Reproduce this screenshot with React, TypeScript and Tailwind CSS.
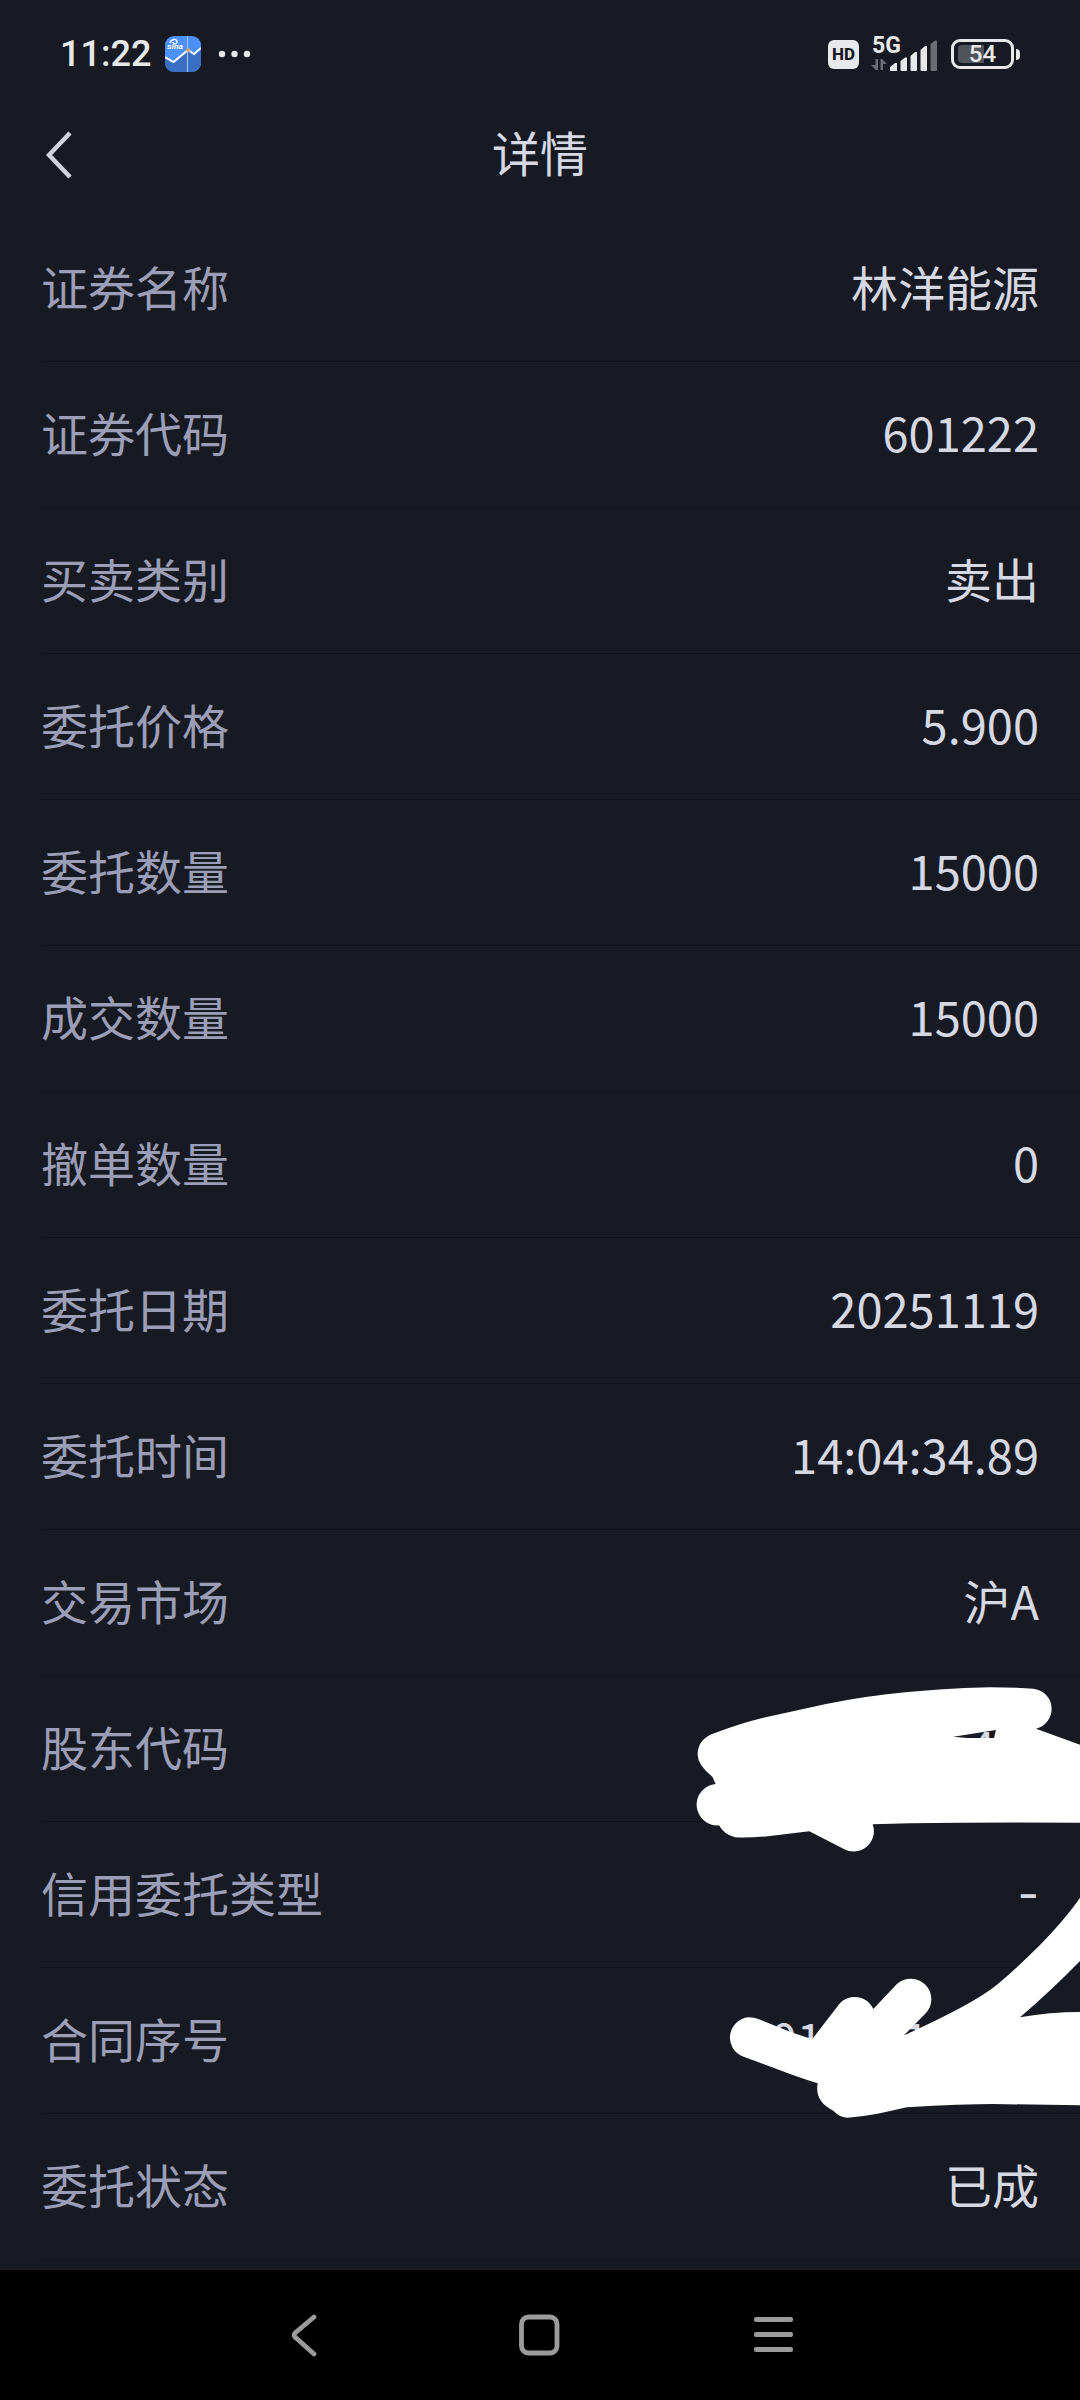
import type { ReactNode } from "react";

function StatusBar() {
  return (
    <div className="flex h-[108px] items-center justify-between pl-[60px] pr-[60px] text-[#e8e8ea]">
      <div className="flex items-center">
        <time className="font-['Roboto',sans-serif] text-[36px] font-medium leading-none">11:22</time>
        <svg className="ml-[14px]" width="36" height="36" viewBox="0 0 36 36" role="img" aria-label="sina">
          <defs>
            <clipPath id="appTile">
              <rect width="36" height="36" rx="9" />
            </clipPath>
          </defs>
          <g clipPath="url(#appTile)">
            <rect width="36" height="36" fill="#4b90fb" />
            <path d="M0 22 8 26 23 14 29 18 36 12V36H0Z" fill="#3a6fc4" />
            <path d="M22.500 0V36" stroke="#a9c3ee" strokeWidth="1" />
            <path d="M0 21 8.500 26 23 14 29 18 36 12" fill="none" stroke="#fff" strokeWidth="2" />
            <circle cx="23" cy="14" r="2" fill="#dba26a" />
            <path d="M5 7C6 3 12 2 12 6C12 9 8 8 8 6" fill="none" stroke="#fff" strokeWidth="1.300" />
            <text x="2" y="13" fill="#fff" fontSize="8" fontWeight="700" fontStyle="italic" fontFamily="Liberation Sans, sans-serif">
              sina
            </text>
          </g>
        </svg>
        <svg className="ml-[17px]" width="34" height="8" viewBox="0 0 34 8" fill="currentColor" aria-hidden="true">
          <circle cx="4" cy="4" r="3.200" />
          <circle cx="16.500" cy="4" r="3.200" />
          <circle cx="29" cy="4" r="3.200" />
        </svg>
      </div>
      <div className="flex items-center font-['Roboto',sans-serif]">
        <span className="flex h-[29px] w-[31px] items-center justify-center rounded-md bg-[#e8e8ea] text-[17px] font-extrabold leading-none text-[#171a22]">
          HD
        </span>
        <div className="relative ml-3 h-[34px] w-[67px]">
          <span className="absolute left-px top-0 text-[23px] font-bold leading-[17px]">5G</span>
          <svg width="67" height="34" viewBox="0 0 67 34" fill="currentColor" aria-hidden="true">
            <path d="M4.500 22H7V33H5L0 28H4.500ZM9.500 33V22H11L16 27H12V33Z" fill="#6b6d74" />
            <path d="M19 30 24 26H26V34H20Q19 34 19 33ZM29.500 24 34 20.500H36V33Q36 34 35 34H31Q29.500 34 29.500 33ZM39.500 19 44 15H46V33Q46 34 45 34H41Q39.500 34 39.500 33ZM49.500 13 54 9H56V33Q56 34 55 34H51Q49.500 34 49.500 33Z" />
            <path d="M59.500 7 64 3.500H66V33Q66 34 65 34H61Q59.500 34 59.500 33Z" fill="#6b6d74" />
          </svg>
        </div>
        <div className="ml-[13px] flex items-center gap-[2px]">
          <div className="relative flex h-[30px] w-[63px] items-center justify-center rounded-[9px] border-[3px] border-[#e8e8ea]">
            <span className="absolute inset-y-[3px] left-1 w-[26px] rounded-l bg-[#50535a]" />
            <span className="relative text-[24px] font-medium leading-none">54</span>
          </div>
          <span className="h-[11px] w-1 rounded-r bg-[#e8e8ea]" />
        </div>
      </div>
    </div>
  );
}

function Header() {
  return (
    <header className="relative flex h-[108px] items-center justify-center pb-[22px]">
      <button type="button" aria-label="返回" className="absolute left-8 top-[15px] flex h-16 w-14 items-center justify-center">
        <svg width="28" height="48" viewBox="0 0 28 48" fill="none" stroke="#d0d2dd" strokeWidth="4.500">
          <path d="M24 2 3 24 24 46" />
        </svg>
      </button>
      <h1 className="text-[48px] leading-none">详情</h1>
    </header>
  );
}

function Row({ label, children }: { label: string; children: ReactNode }) {
  return (
    <div className="relative ml-[41px] flex h-[146px] items-center justify-between border-b border-[#0e1118] pb-[6px] pr-[41px] text-[47px] leading-none">
      <dt className="text-[#9b9eb6]">{label}</dt>
      <dd>{children}</dd>
    </div>
  );
}

const orderRows = [
  ["证券名称", "林洋能源"],
  ["证券代码", "601222"],
  ["买卖类别", "卖出"],
  ["委托价格", "5.900"],
  ["委托数量", "15000"],
  ["成交数量", "15000"],
  ["撤单数量", "0"],
  ["委托日期", "20251119"],
  ["委托时间", "14:04:34.89"],
  ["交易市场", "沪A"],
];

/* Freehand white marks that cover the account and contract numbers. */
function Redaction() {
  return (
    <svg
      className="pointer-events-none absolute right-0 top-0 z-10"
      width="400"
      height="460"
      viewBox="0 48 1200 1380"
      fill="#fff"
      aria-hidden="true"
    >
      <path
        fillRule="evenodd"
        d="M107 218Q180 190 250 173L380 145Q500 117 620 103Q780 85 930 82Q1010 82 1060 86A61 61 0 0 1 1068 206L1200 254V488Q900 486 690 490L578 493A61 61 0 0 1 493 568L388 514L270 528Q210 534 165 532Q132 524 117 496A62 62 0 0 1 107 372L97 350Q53 315 53 285Q52 235 107 218ZM820 230 948 210 942 234 860 234Z"
      />
      <path
        transform="translate(0 600)"
        d="M205 472A61 61 0 0 0 185 588L330 642Q380 660 413 670Q403 725 460 752Q480 773 503 773Q560 768 600 760L680 742Q850 732 940 732L1200 736V456Q1110 456 1020 472Q1110 395 1200 303V113Q1160 172 1080 255Q1010 325 950 375Q880 432 672 526L735 462A61 61 0 0 0 650 373L580 447A61 61 0 0 0 478 432L397 537Q350 523 330 515L235 477Q222 472 205 472Z"
      />
    </svg>
  );
}

function NavBar() {
  return (
    <nav className="mt-auto flex h-[130px] items-center justify-center bg-black text-[#9b9b9b]">
      <button type="button" aria-label="后退" className="flex h-full w-[234px] items-center justify-center">
        <svg width="30" height="44" viewBox="0 0 30 44" fill="none" stroke="currentColor" strokeWidth="4.800" strokeLinecap="round" strokeLinejoin="round">
          <path d="M23 4 4 20Q2.500 22 4 24L23 41" />
        </svg>
      </button>
      <button type="button" aria-label="主页" className="flex h-full w-[234px] items-center justify-center">
        <svg width="42" height="42" viewBox="0 0 42 42" fill="none" stroke="currentColor" strokeWidth="4.800">
          <rect x="2.500" y="3" width="35.500" height="36" rx="7" />
        </svg>
      </button>
      <button type="button" aria-label="最近任务" className="flex h-full w-[234px] items-center justify-center">
        <svg width="40" height="38" viewBox="0 0 40 38" fill="currentColor">
          <rect x="0" y="1" width="39" height="5" rx="2" />
          <rect x="0" y="16" width="39" height="5" rx="2" />
          <rect x="0" y="31" width="39" height="5" rx="2" />
        </svg>
      </button>
    </nav>
  );
}

export default function App() {
  return (
    <div className="flex min-h-screen flex-col overflow-hidden bg-[#171a22] font-['Noto_Sans_CJK_SC',sans-serif] text-[#d6d8e3]">
      <StatusBar />
      <Header />
      <main className="pb-[10px]">
        <dl>
          {orderRows.map(([label, value]) => (
            <Row key={label} label={label}>
              {value}
            </Row>
          ))}
          <Row label="股东代码">
            <span className="pr-11">4</span>
            <Redaction />
          </Row>
          <Row label="信用委托类型">
            <span className="font-['Inter',sans-serif]">-</span>
          </Row>
          <Row label="合同序号">
            <span className="flex gap-[80px] pr-[110px]">
              <span>01</span>
              <span>1</span>
            </span>
          </Row>
          <Row label="委托状态">已成</Row>
        </dl>
      </main>
      <NavBar />
    </div>
  );
}
